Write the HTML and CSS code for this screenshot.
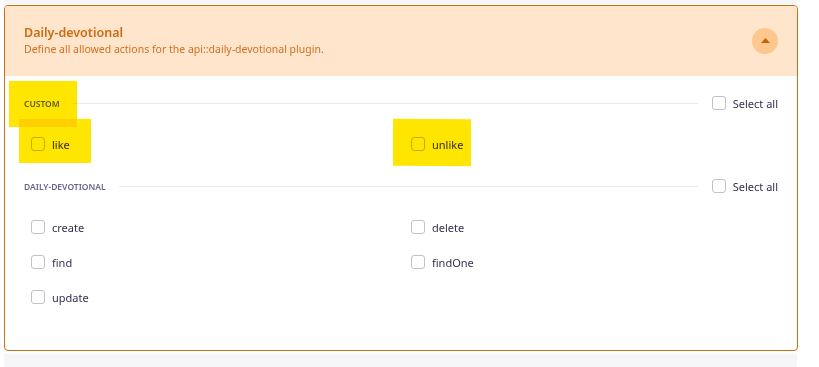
FILE: index.html
```html
<!DOCTYPE html>
<html lang="en">

<head>
    <meta charset="UTF-8">
    <meta name="viewport" content="width=device-width, initial-scale=1.0">
    <title>Permissions - Daily-devotional</title>
    <link rel="stylesheet" href="styles.css">
</head>

<body>
<div class="strip strip-top"></div>

<!-- plugin permissions card -->
<section class="perm-card">
    <header class="perm-head">
        <div>
            <h2 class="perm-title">Daily-devotional</h2>
            <p class="perm-desc">Define all allowed actions for the api::daily-devotional plugin.</p>
        </div>
        <button class="toggle" aria-label="Collapse">
            <svg width="9" height="5" viewBox="0 0 9 5"><path d="M0 5 L4.5 0 L9 5 Z" fill="#c4620a"/></svg>
        </button>
    </header>

    <div class="perm-body">
        <!-- custom actions -->
        <div class="group">
            <div class="group-head">
                <span class="group-name">Custom</span>
                <span class="group-line"></span>
                <label class="check"><span class="box"></span>Select all</label>
            </div>
            <div class="actions">
                <label class="check"><span class="box"></span>like</label>
                <label class="check"><span class="box"></span>unlike</label>
            </div>
        </div>

        <!-- generated actions -->
        <div class="group">
            <div class="group-head">
                <span class="group-name">Daily-devotional</span>
                <span class="group-line"></span>
                <label class="check"><span class="box"></span>Select all</label>
            </div>
            <div class="actions">
                <label class="check"><span class="box"></span>create</label>
                <label class="check"><span class="box"></span>delete</label>
                <label class="check"><span class="box"></span>find</label>
                <label class="check"><span class="box"></span>findOne</label>
                <label class="check"><span class="box"></span>update</label>
            </div>
        </div>
    </div>
</section>

<div class="strip strip-bottom"></div>

<!-- highlighter marks drawn over the screenshot -->
<div class="mark mark-custom"></div>
<div class="mark mark-like"></div>
<div class="mark mark-unlike"></div>
</body>

</html>
```

FILE: styles.css
```css
body {
    margin: 0;
    background-color: white;
    font-family: "Noto Sans", "Open Sans", sans-serif;
    color: #32324d;
}

.strip {
    background-color: #f6f6f9;
    margin: 0 22px 0 4px;
}

.strip-top {
    height: 4px;
}

.strip-bottom {
    height: 13px;
    margin-top: 3px;
}

.perm-card {
    margin: 1px 21px 0 4px;
    border: 1px solid #c9701a;
    border-radius: 4px;
    overflow: hidden;
}

.perm-head {
    height: 70px;
    padding: 0 19px 0 19px;
    background-color: #fee5cc;
    display: flex;
    align-items: center;
    justify-content: space-between;
}

.perm-title {
    margin: 0;
    font-size: 12.5px;
    line-height: 16px;
    font-weight: 600;
    color: #cf6a12;
}

.perm-desc {
    margin: 0;
    font-size: 10.5px;
    line-height: 16px;
    color: #d27020;
}

.toggle {
    width: 26px;
    height: 26px;
    border: none;
    border-radius: 50%;
    background-color: #fdc78e;
    padding: 0;
    display: grid;
    place-items: center;
    cursor: pointer;
}

.toggle svg {
    display: block;
    margin-top: -1px;
}

.perm-body {
    box-sizing: border-box;
    height: 274px;
    padding: 20px 19px 0 19px;
}

.group + .group {
    margin-top: 28px;
}

.group-head {
    height: 14px;
    display: flex;
    align-items: center;
}

.group-name {
    font-size: 8.5px;
    font-weight: 600;
    text-transform: uppercase;
    color: #666687;
}

.group-line {
    flex: 1;
    height: 1px;
    background-color: #eaeaef;
    margin: 0 14px 0 13px;
}

.actions {
    margin-top: 27px;
    padding-left: 7px;
    display: grid;
    grid-template-columns: 380px 1fr;
    row-gap: 21px;
}

.check {
    height: 14px;
    display: flex;
    align-items: center;
    font-size: 11px;
    color: #32324d;
    cursor: pointer;
}

.box {
    width: 12px;
    height: 12px;
    border: 1px solid #c0c0cf;
    border-radius: 3px;
    background-color: white;
    margin-right: 7px;
}

.mark {
    position: absolute;
    background-color: #ffe600;
    mix-blend-mode: multiply;
}

.mark-custom {
    left: 9px;
    top: 81px;
    width: 68px;
    height: 46px;
}

.mark-like {
    left: 19px;
    top: 119px;
    width: 72px;
    height: 44px;
}

.mark-unlike {
    left: 393px;
    top: 119px;
    width: 78px;
    height: 47px;
    transform: skewY(0.5deg);
}
```
